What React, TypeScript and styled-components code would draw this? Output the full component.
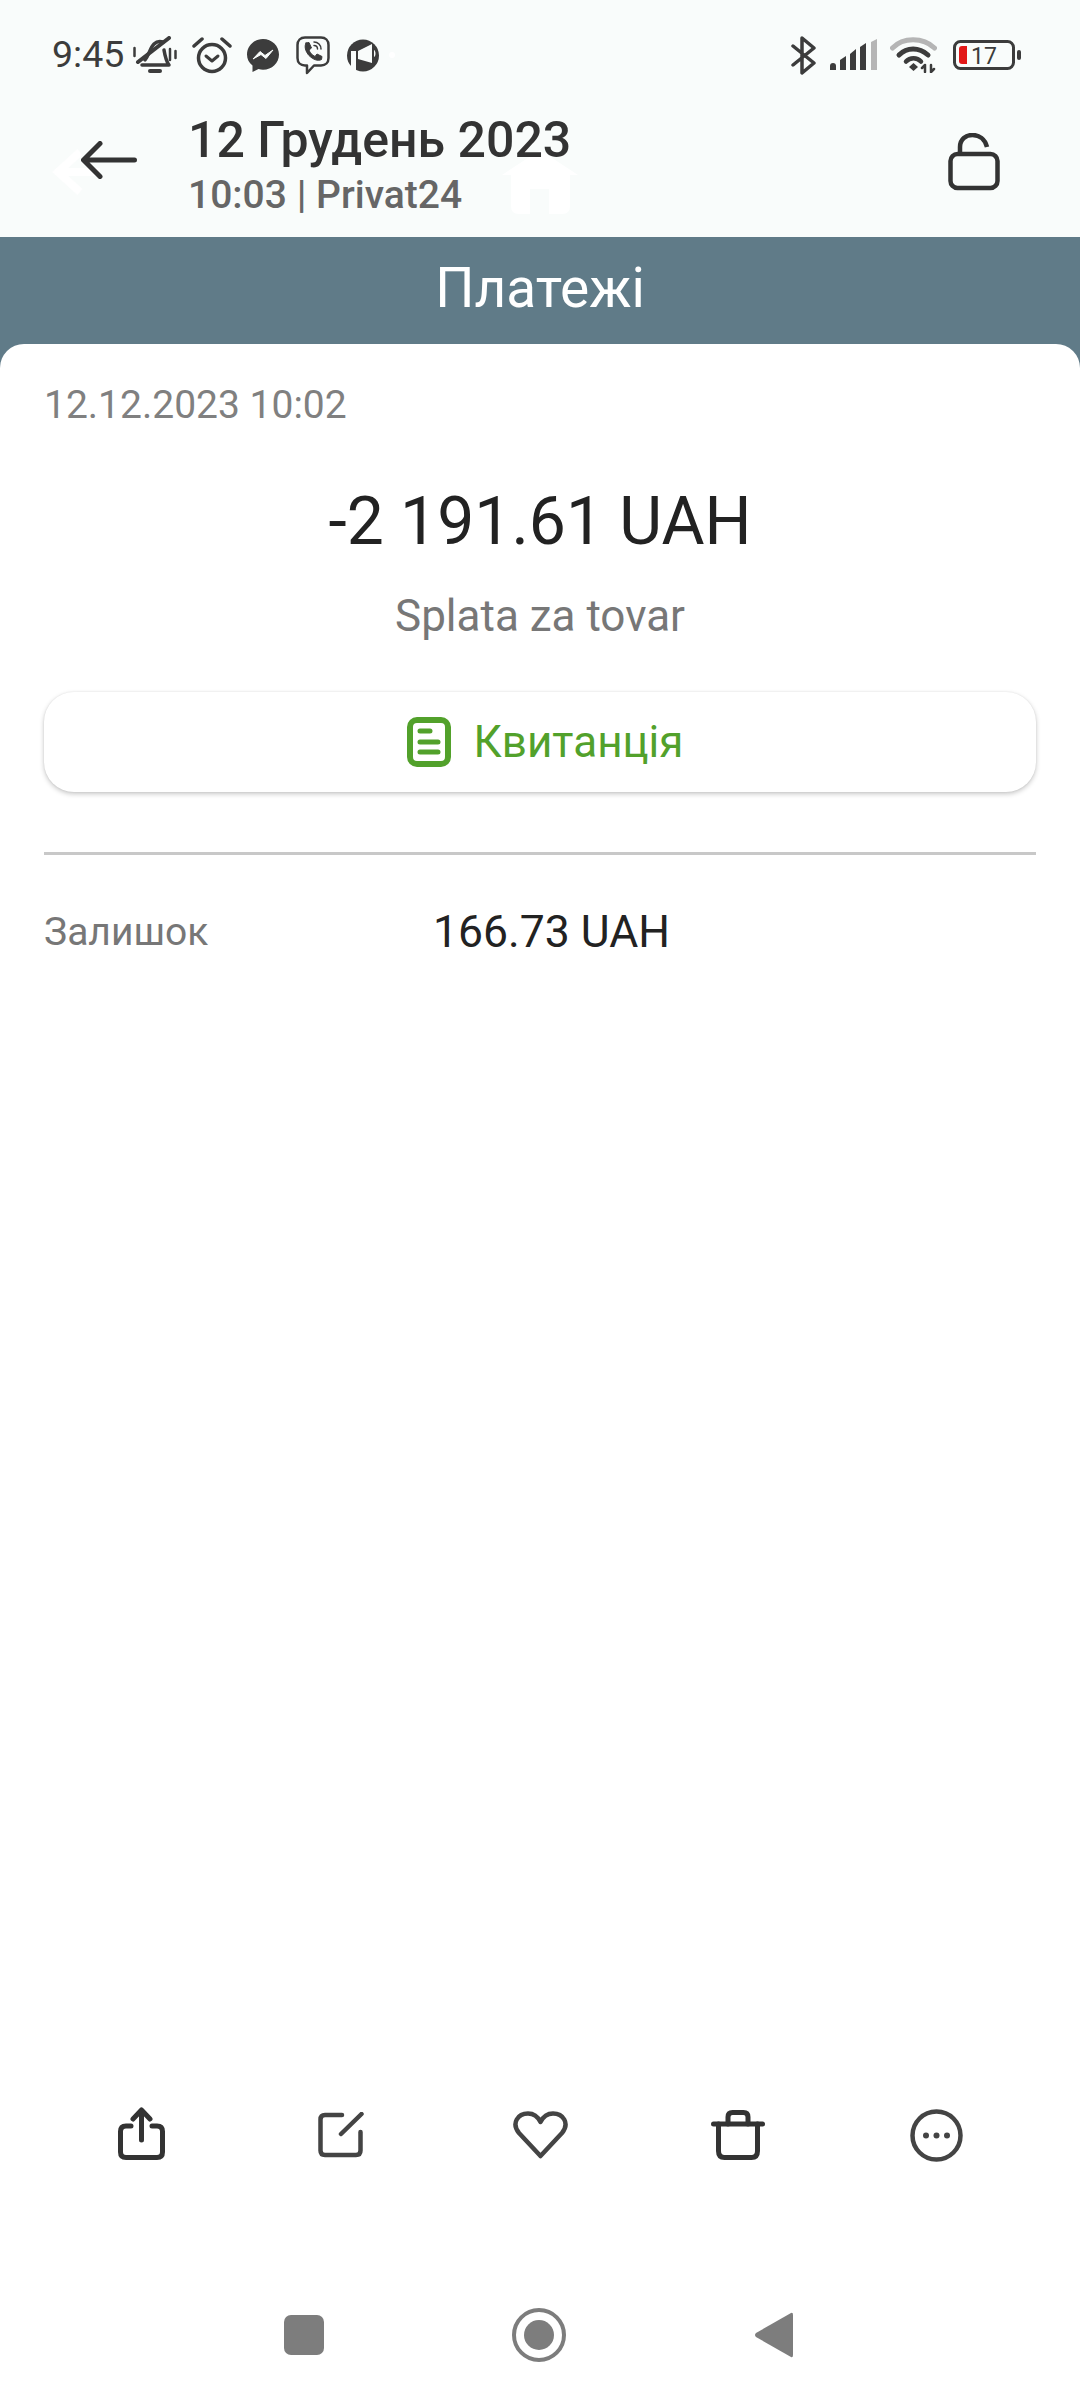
import React from "react";
import styled, { createGlobalStyle } from "styled-components";

const GlobalStyle = createGlobalStyle`
  html, body {
    margin: 0;
    padding: 0;
    background: #ffffff;
    font-family: Roboto, "Noto Sans", sans-serif;
  }
`;

const Page = styled.div`
  position: relative;
  width: 1080px;
  height: 2400px;
  display: flex;
  flex-direction: column;
  overflow: hidden;
  background: #f9fcfb;
`;

const StatusBar = styled.div`
  height: 100px;
  padding: 10px 59px 0 52px;
  box-sizing: border-box;
  display: flex;
  align-items: center;
  flex-shrink: 0;
`;

const Time = styled.span`
  font-size: 37.5px;
  line-height: 1;
  color: #3c3c3c;
  width: 70px;
`;

const StatusIcon = styled.svg<{ $gap?: number }>`
  display: block;
  flex-shrink: 0;
  margin-left: ${(p) => p.$gap ?? 0}px;
`;

const StatusRight = styled.div`
  margin-left: auto;
  display: flex;
  align-items: center;
`;

const Header = styled.div`
  height: 137px;
  padding: 0 80px 0 81px;
  box-sizing: border-box;
  display: flex;
  align-items: center;
  flex-shrink: 0;
  position: relative;
`;

const BackIcon = styled.svg`
  display: block;
  flex-shrink: 0;
  margin-top: -18px;
`;

const HeaderText = styled.div`
  margin-left: 51px;
  margin-top: -10px;
  display: flex;
  flex-direction: column;
`;

const Title = styled.div`
  font-size: 50px;
  line-height: 62px;
  font-weight: 500;
  color: #333333;
`;

const Subtitle = styled.div`
  font-size: 39px;
  line-height: 48px;
  font-weight: 500;
  color: #666666;
`;

const HeaderAction = styled.svg`
  display: block;
  margin-left: auto;
  margin-top: -14px;
`;

const Ghost = styled.svg`
  position: absolute;
  left: 0;
  top: 0;
  pointer-events: none;
`;

const Main = styled.div`
  flex: 1;
  display: flex;
  flex-direction: column;
  background: #607b88;
`;

const SectionBar = styled.div`
  height: 107px;
  flex-shrink: 0;
  display: flex;
  align-items: center;
  justify-content: center;
  color: #ffffff;
  font-size: 55px;
  padding-bottom: 5px;
  box-sizing: border-box;
`;

const Card = styled.div`
  flex: 1;
  display: flex;
  flex-direction: column;
  background: #ffffff;
  border-radius: 24px 24px 0 0;
`;

const Details = styled.div`
  padding: 37px 44px 0;
  display: flex;
  flex-direction: column;
`;

const DateText = styled.div`
  font-size: 39px;
  line-height: 48px;
  color: #808080;
`;

const Amount = styled.div`
  margin-top: 55px;
  text-align: center;
  font-size: 66px;
  line-height: 76px;
  color: #222222;
`;

const Purpose = styled.div`
  margin-top: 31px;
  text-align: center;
  font-size: 44px;
  line-height: 50px;
  color: #777777;
`;

const ReceiptButton = styled.div`
  margin-top: 51px;
  height: 100px;
  padding-left: 10px;
  box-sizing: border-box;
  display: flex;
  align-items: center;
  justify-content: center;
  gap: 23px;
  border-radius: 30px;
  background: #ffffff;
  box-shadow: 0 2px 5px rgba(0, 0, 0, 0.22), 0 0 2px rgba(0, 0, 0, 0.08);
  color: #52a12b;
  font-size: 44px;
`;

const Divider = styled.div`
  margin-top: 60px;
  height: 3px;
  background: #c8c8c8;
`;

const InfoRow = styled.div`
  margin-top: 53px;
  display: grid;
  grid-template-columns: 389px 1fr;
  align-items: center;
`;

const InfoLabel = styled.div`
  font-size: 39px;
  line-height: 48px;
  color: #777777;
`;

const InfoValue = styled.div`
  font-size: 44.5px;
  line-height: 48px;
  color: #222222;
`;

const Toolbar = styled.div`
  margin-top: auto;
  height: 120px;
  padding: 0 44px;
  display: grid;
  grid-template-columns: repeat(5, 1fr);
  align-items: center;
  justify-items: center;
  flex-shrink: 0;
`;

const ToolIcon = styled.svg<{ $nudge?: number; $lift?: number }>`
  display: block;
  fill: none;
  margin-left: ${(p) => p.$nudge ?? 0}px;
  margin-bottom: ${(p) => p.$lift ?? 0}px;
`;

const NavBar = styled.div`
  height: 205px;
  padding: 113px 3px 0 0;
  box-sizing: border-box;
  display: grid;
  grid-template-columns: repeat(3, 235px);
  justify-content: center;
  align-items: start;
  justify-items: center;
  flex-shrink: 0;
`;

const NavIcon = styled.svg<{ $top?: number }>`
  display: block;
  fill: #7d7d7d;
  margin-top: ${(p) => p.$top ?? 0}px;
`;

const App: React.FC = () => {
  return (
    <>
      <GlobalStyle />
      <Page>
        <Ghost width="1080" height="237" viewBox="0 0 1080 237" fill="none">
          <path d="M80 152 L58 172 L80 192 M60 172 H100" stroke="#ffffff" strokeWidth="8" />
          <path
            d="M502 175 L540 150 L578 175 H570 V206 Q570 214 562 214 H549 V189 H530 V214 H519 Q511 214 511 206 V175 Z"
            fill="#ffffff"
          />
          <circle cx="392" cy="55" r="3" fill="#ffffff" />
        </Ghost>

        <StatusBar>
          <Time>9:45</Time>

          <StatusIcon $gap={11} width="44" height="38" viewBox="0 0 44 38" fill="none" stroke="#3c3c3c" strokeWidth="3.5" strokeLinecap="round" strokeLinejoin="round">
            <path d="M1.5 12 V20 M37 13 V24 M42.5 15 V22" strokeWidth="2.5" />
            <path d="M9 29 H36 C33 25 32 20 31 14 M12 24 C16 19 17 12 21 8 C24 5 27 5 30 6" />
            <path d="M5 26 L36 2" strokeWidth="4" />
            <path d="M17 35 H27" strokeWidth="4" />
          </StatusIcon>

          <StatusIcon $gap={15} width="40" height="37" viewBox="0 0 40 37" fill="none" stroke="#3c3c3c" strokeLinecap="round" strokeLinejoin="round">
            <circle cx="20" cy="21" r="13.5" strokeWidth="3.5" />
            <path d="M14 19 L20 24 L26 19" strokeWidth="3" />
            <path d="M2 9 L10 2 M38 9 L30 2" strokeWidth="3.5" />
          </StatusIcon>

          <StatusIcon $gap={15} width="32" height="33" viewBox="0 0 32 33">
            <path d="M16 0 C7 0 0 7 0 15.5 C0 20 2 24 5.5 26.5 V33 L11.5 30 C13 30.5 14.5 30.8 16 30.8 C25 30.8 32 24 32 15.5 C32 7 25 0 16 0 Z" fill="#3c3c3c" />
            <path d="M6 20 L13 12.5 L18 16.5 L26 11 L19 19.5 L14 15.5 Z" fill="#f9fcfb" stroke="#f9fcfb" strokeWidth="1" strokeLinejoin="round" />
          </StatusIcon>

          <StatusIcon $gap={17} width="34" height="39" viewBox="0 0 34 39" fill="none" stroke="#3c3c3c" strokeLinecap="round" strokeLinejoin="round">
            <path d="M9 1.5 H25 C29.5 1.5 32.5 4.5 32.5 9 V22 C32.5 26.5 29.5 29.5 25 29.5 H18 L11 37 V29.5 H9 C4.5 29.5 1.5 26.5 1.5 22 V9 C1.5 4.5 4.5 1.5 9 1.5 Z" strokeWidth="2.5" />
            <path d="M10 7 L13 6.5 L15.5 12 L13 14 C14 17 16 19 19 20.5 L21 18 L26 20.5 L25.5 23.5 C22 25.5 17 23.5 13 19.5 C9.5 15.5 8 10.5 10 7 Z" fill="#3c3c3c" strokeWidth="1" />
            <path d="M18 6 C22 6 25 9 25 13 M18 9.5 C20 9.5 21.5 11 21.5 13" strokeWidth="1.5" />
          </StatusIcon>

          <StatusIcon $gap={17} width="32" height="33" viewBox="0 0 32 33">
            <circle cx="16" cy="16.5" r="16" fill="#3c3c3c" />
            <path d="M4 12 H9 V31 H4 Z M11 12 L25 5 V24 L11 20 Z" fill="#f9fcfb" />
            <path d="M27 11 C29 12 29 17 27 18 Z" fill="#f9fcfb" />
          </StatusIcon>

          <StatusRight>
            <StatusIcon width="25" height="39" viewBox="0 0 25 39" fill="none" stroke="#3c3c3c" strokeWidth="3.5" strokeLinecap="round" strokeLinejoin="round">
              <path d="M2 10 L23 27 L11 37 V2 L23 12 L2 29" />
            </StatusIcon>

            <StatusIcon $gap={14} width="48" height="32" viewBox="0 0 48 32">
              <path d="M0 31 V27 Q0 24 3 24 Q6 24 6 27 V31 Z" fill="#3c3c3c" />
              <path d="M10 31 V21 L16 17 V31 Z" fill="#3c3c3c" />
              <path d="M20 31 V15 L26 10 V31 Z" fill="#3c3c3c" />
              <path d="M30 31 V8 L36 4 V31 Z" fill="#3c3c3c" />
              <path d="M41 31 V3 L47 0 V31 Z" fill="#b5b5b5" />
            </StatusIcon>

            <StatusIcon $gap={12} width="47" height="36" viewBox="0 0 47 36" fill="none" strokeLinecap="round">
              <path d="M2.5 11 C13 0 33 0 44.5 11" stroke="#b5b5b5" strokeWidth="5" />
              <path d="M9 18 C17 10 29 10 38 18" stroke="#3c3c3c" strokeWidth="5" />
              <path d="M16 24.5 C20 20 27 20 31 24.5" stroke="#3c3c3c" strokeWidth="4.5" />
              <path d="M19 30 L23.5 26 L28 30 L23.5 34 Z" fill="#3c3c3c" />
              <path d="M35 35 V28 M35 28 L32 31 M41 28 V35 M41 35 L44 32" stroke="#3c3c3c" strokeWidth="2.5" />
            </StatusIcon>

            <StatusIcon $gap={16} width="68" height="30" viewBox="0 0 68 30" fill="none">
              <rect x="1.5" y="1.5" width="59" height="27" rx="6" stroke="#3c3c3c" strokeWidth="3" />
              <path d="M9 6 H14 V24 H9 Q6 24 6 21 V9 Q6 6 9 6 Z" fill="#e21818" />
              <text x="18" y="24" fontFamily="Roboto, sans-serif" fontSize="23" fill="#3c3c3c">17</text>
              <rect x="64" y="10" width="4" height="10" rx="2" fill="#3c3c3c" />
            </StatusIcon>
          </StatusRight>
        </StatusBar>

        <Header>
          <BackIcon width="56" height="38" viewBox="0 0 56 38" fill="none" stroke="#333333" strokeWidth="5" strokeLinecap="round" strokeLinejoin="round">
            <path d="M53.5 19 H3 M19 2.5 L2.5 19 L19 35.5" />
          </BackIcon>
          <HeaderText>
            <Title>12 Грудень 2023</Title>
            <Subtitle>10:03 | Privat24</Subtitle>
          </HeaderText>
          <HeaderAction width="52" height="58" viewBox="0 0 52 58" fill="none" stroke="#333333" strokeWidth="4.5">
            <path d="M12 21 V14 C12 6 18 2 24.5 2 C31 2 37 6 39 14" />
            <rect x="2.5" y="21" width="47" height="34" rx="7" />
          </HeaderAction>
        </Header>

        <Main>
          <SectionBar>Платежі</SectionBar>
          <Card>
            <Details>
              <DateText>12.12.2023 10:02</DateText>
              <Amount>-2 191.61 UAH</Amount>
              <Purpose>Splata za tovar</Purpose>
              <ReceiptButton>
                <svg width="44" height="50" viewBox="0 0 44 50" fill="none" stroke="#52a12b" strokeLinecap="round">
                  <rect x="3" y="3" width="38" height="44" rx="7" strokeWidth="6" />
                  <path d="M13 14 H23 M13 25 H31 M13 35 H31" strokeWidth="5" />
                </svg>
                Квитанція
              </ReceiptButton>
              <Divider />
              <InfoRow>
                <InfoLabel>Залишок</InfoLabel>
                <InfoValue>166.73 UAH</InfoValue>
              </InfoRow>
            </Details>

            <Toolbar>
              <ToolIcon $nudge={-4} $lift={4} width="47" height="53" viewBox="0 0 47 53" stroke="#333333" strokeWidth="5" strokeLinecap="round" strokeLinejoin="round">
                <path d="M13 19 H8 C4.5 19 2.5 21 2.5 24.5 V45 C2.5 48.5 4.5 50.5 8 50.5 H39 C42.5 50.5 44.5 48.5 44.5 45 V24.5 C44.5 21 42.5 19 39 19 H34" />
                <path d="M23.5 33 V4 M15 12 L23.5 3 L32 12" />
              </ToolIcon>
              <ToolIcon $nudge={-2} width="46" height="46" viewBox="0 0 46 46" stroke="#444444" strokeWidth="4.5" strokeLinecap="round" strokeLinejoin="round">
                <path d="M24 3 H7 C4 3 2.5 4.5 2.5 7.5 V38.5 C2.5 41.5 4 43 7 43 H38 C41 43 42.5 41.5 42.5 38.5 V20" />
                <path d="M23 22 L43.5 2" />
              </ToolIcon>
              <ToolIcon $nudge={2} width="55" height="48" viewBox="0 0 55 48" stroke="#444444" strokeWidth="4.5" strokeLinejoin="round">
                <path d="M27.5 45 L6 22 C-2 12 5 2.5 15 2.5 C21 2.5 25 6 27.5 11 C30 6 34 2.5 40 2.5 C50 2.5 57 12 49 22 Z" />
              </ToolIcon>
              <ToolIcon width="54" height="50" viewBox="0 0 54 50" stroke="#333333" strokeWidth="5" strokeLinecap="round" strokeLinejoin="round">
                <path d="M2.5 14 H51.5" />
                <path d="M17 14 V7 C17 4 18.5 2.5 21.5 2.5 H32.5 C35.5 2.5 37 4 37 7 V14" />
                <path d="M7.5 14 V41 C7.5 45 9.5 47.5 13.5 47.5 H40.5 C44.5 47.5 46.5 45 46.5 41 V14" />
              </ToolIcon>
              <ToolIcon width="53" height="53" viewBox="0 0 53 53">
                <circle cx="26.5" cy="26.5" r="24" stroke="#444444" strokeWidth="4.5" />
                <circle cx="16" cy="26.5" r="3" fill="#444444" />
                <circle cx="26.5" cy="26.5" r="3" fill="#444444" />
                <circle cx="37" cy="26.5" r="3" fill="#444444" />
              </ToolIcon>
            </Toolbar>

            <NavBar>
              <NavIcon $top={7} width="40" height="40" viewBox="0 0 40 40">
                <rect width="40" height="40" rx="7" />
              </NavIcon>
              <NavIcon width="54" height="54" viewBox="0 0 54 54">
                <circle cx="27" cy="27" r="25" fill="none" stroke="#7d7d7d" strokeWidth="4" />
                <circle cx="27" cy="27" r="15" />
              </NavIcon>
              <NavIcon $top={4} width="38" height="46" viewBox="0 0 38 46">
                <path d="M36 1 Q38 0 38 3 V43 Q38 46 36 45 L1 25 Q-1 23 1 21 Z" />
              </NavIcon>
            </NavBar>
          </Card>
        </Main>
      </Page>
    </>
  );
};

export default App;
